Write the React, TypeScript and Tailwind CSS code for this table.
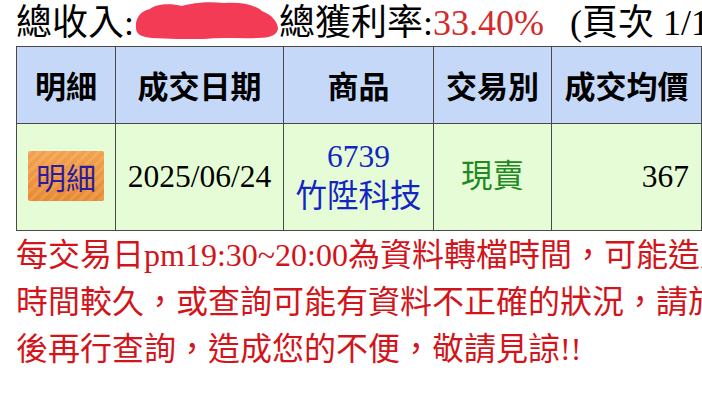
import React from 'react';

const cell = 'border border-[#4a4a4a] p-0 text-center align-middle';

function Blob() {
  return (
    <svg width="145" height="40" viewBox="0 0 145 40" className="inline-block align-[-6px]">
      <path
        d="M2 27 C1 18 6 10 16 8 C22 3 36 2 48 5 C58 2 74 0 90 2 C106 1 120 3 128 10 C138 14 144 21 144 28 C143 34 136 37 124 37 C106 38 88 36 70 38 C52 38 34 38 18 37 C7 36 2 33 2 27 Z"
        fill="#f43b55"
      />
    </svg>
  );
}

export default function App() {
  return (
    <div className="w-[702px] h-[403px] overflow-hidden bg-white pl-4 font-['Liberation_Serif','Noto_Sans_CJK_TC',serif] text-black">
      <div className="whitespace-nowrap text-[36px] leading-[46px]">
        總收入:<Blob />總獲利率:<span className="text-[#d42a2a]">33.40%</span>
        <span className="ml-[26px]">(頁次 1/1)</span>
      </div>

      <table className="border-collapse w-[685px] table-fixed">
        <colgroup>
          <col className="w-[99px]" />
          <col className="w-[168px]" />
          <col className="w-[150px]" />
          <col className="w-[118px]" />
          <col className="w-[150px]" />
        </colgroup>
        <thead>
          <tr className="h-[77px] bg-[#c5d8f8] font-['Noto_Sans_CJK_TC',sans-serif] text-[31px] font-bold">
            <th className={cell}>明細</th>
            <th className={cell}>成交日期</th>
            <th className={cell}>商品</th>
            <th className={cell}>交易別</th>
            <th className={cell}>成交均價</th>
          </tr>
        </thead>
        <tbody>
          <tr className="h-[107px] bg-[#e6fcd6] text-[31.5px]">
            <td className={cell}>
              <span className="inline-flex h-[50px] w-[76px] items-center justify-center rounded-[2px] bg-[repeating-linear-gradient(135deg,rgba(255,255,255,0.12)_0,rgba(255,255,255,0.12)_3px,transparent_3px,transparent_7px),linear-gradient(180deg,#f2a24e,#e88a32)] font-['Noto_Sans_CJK_TC',sans-serif] text-[30px] leading-none text-[#2e1c9e]">
                明細
              </span>
            </td>
            <td className={cell}>2025/06/24</td>
            <td className={`${cell} leading-[40px] text-[#1326c4]`}>
              <div>6739</div>
              <div>竹陞科技</div>
            </td>
            <td className={`${cell} text-[#1f8a1f]`}>現賣</td>
            <td className={`${cell} text-right pr-3`}>367</td>
          </tr>
        </tbody>
      </table>

      <div className="whitespace-nowrap pt-[1px] text-[32px] leading-[47px] text-[#d2151b]">
        <div>每交易日pm19:30~20:00為資料轉檔時間，可能造成查詢</div>
        <div>時間較久，或查詢可能有資料不正確的狀況，請於稍</div>
        <div>後再行查詢，造成您的不便，敬請見諒!!</div>
      </div>
    </div>
  );
}
